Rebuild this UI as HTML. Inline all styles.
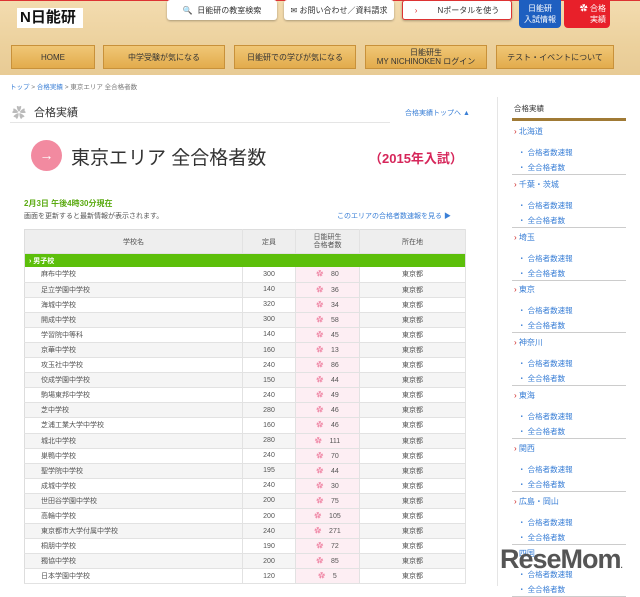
<!DOCTYPE html><html><head><meta charset="utf-8"><style>
*{margin:0;padding:0;box-sizing:border-box}
body{width:640px;height:586px;overflow:hidden;background:#fff;font-family:"Liberation Sans","Noto Sans CJK JP",sans-serif;position:relative;color:#333}
.a{position:absolute}
.hdr{left:0;top:0;width:640px;height:75px;background:linear-gradient(180deg,#f3dcb0,#ecd19d 60%,#e8cb95)}
.tb{background:#fff;border-radius:3px;box-shadow:0 1px 2px rgba(0,0,0,.3);font-size:8px;display:flex;align-items:center;justify-content:center;top:0;height:20px}
.nav{top:45px;height:24px;background:linear-gradient(#f0c776,#e2ab4c);border:1px solid #c8913a;font-size:8px;display:flex;align-items:center;justify-content:center;text-align:center;line-height:9px;color:#333}
table{border-collapse:collapse;font-size:7px;color:#555}
td{height:15.1px;border-bottom:1px solid #e2e2e2;border-right:1px solid #e2e2e2}
.sb{font-size:7.5px;color:#3a7fd6}
</style></head><body>
<div class="a hdr"></div>
<div class="a" style="left:0;top:0;width:640px;height:1px;background:#d33"></div>
<div class="a" style="left:17px;top:8px;width:66px;height:20px;background:#fff;font-size:15px;font-weight:bold;line-height:20px;padding-left:3px;color:#111">N日能研</div>
<div class="a tb" style="left:167px;width:110px">🔍&nbsp; 日能研の教室検索</div>
<div class="a tb" style="left:284px;width:110px">✉ お問い合わせ／資料請求</div>
<div class="a tb" style="left:402px;width:110px;border:1px solid #d33"><span style="color:#d33;margin-right:20px">›</span>Nポータルを使う</div>
<div class="a" style="left:519px;top:0;width:42px;height:28px;background:#1e5fc0;border-radius:0 0 4px 4px;color:#fff;font-size:8px;text-align:center;line-height:11px;padding-top:3px">日能研<br>入試情報</div>
<div class="a" style="left:564px;top:0;width:46px;height:28px;background:#e8202a;border-radius:0 0 4px 4px;color:#fff;font-size:8px;text-align:right;line-height:11px;padding:3px 4px 0 0">✿ 合格<br>実績</div>
<div class="a nav" style="left:11px;width:84px">HOME</div>
<div class="a nav" style="left:103px;width:122px">中学受験が気になる</div>
<div class="a nav" style="left:234px;width:122px">日能研での学びが気になる</div>
<div class="a nav" style="left:365px;width:122px">日能研生<br>MY NICHINOKEN ログイン</div>
<div class="a nav" style="left:496px;width:118px">テスト・イベントについて</div>
<div class="a" style="left:10px;top:81px;font-size:6.5px;color:#777"><span style="color:#3a7fd6">トップ</span> &gt; <span style="color:#3a7fd6">合格実績</span> &gt; 東京エリア 全合格者数</div>
<div class="a" style="left:12px;top:103px;font-size:14px;color:#bbb">✿</div>
<div class="a" style="left:34px;top:104px;font-size:11px;color:#333">合格実績</div>
<div class="a" style="left:405px;top:108px;font-size:7px;color:#3a7fd6">合格実績トップへ ▲</div>
<div class="a" style="left:10px;top:122px;width:380px;height:1px;background:#e5e5e5"></div>
<div class="a" style="left:497px;top:97px;width:1px;height:489px;background:#e5e5e5"></div>
<div class="a" style="left:31px;top:140px;width:31px;height:31px;border-radius:50%;background:#f28aa0;color:#fff;font-size:14px;line-height:31px;text-align:center">→</div>
<div class="a" style="left:71px;top:143px;font-size:19px;color:#333">東京エリア 全合格者数</div>
<div class="a" style="left:369px;top:148px;font-size:13px;font-weight:bold;color:#d6265a">（2015年入試）</div>
<div class="a" style="left:24px;top:198px;font-size:8px;font-weight:bold;color:#5aaa10">2月3日 午後4時30分現在</div>
<div class="a" style="left:24px;top:211px;font-size:7px;color:#555">画面を更新すると最新情報が表示されます。</div>
<div class="a" style="left:337px;top:211px;font-size:7px;color:#3a7fd6">このエリアの合格者数速報を見る ▶</div>
<table class="a" style="left:24px;top:229px;width:442px;border:1px solid #ddd">
<tr style="background:#eee;height:24px;text-align:center"><td style="width:218px">学校名</td><td style="width:53px">定員</td><td style="width:64px;line-height:8px">日能研生<br>合格者数</td><td>所在地</td></tr>
<tr style="background:#5cbf0a;color:#fff;font-weight:bold"><td colspan="4" style="height:14px;padding-left:4px;border:0">› 男子校</td></tr>
</table>
<table class="a" id="t" style="left:24px;top:267px;width:442px;border-left:1px solid #ddd"></table>
<div class="a" id="s"></div>
<div class="a" style="left:500px;top:544px;font-size:27px;font-weight:bold;color:#555;letter-spacing:-1px;font-family:'Liberation Sans',sans-serif">ReseMom<span style="font-size:8px">.</span></div>
<script>
var d=[["麻布中学校",300,80],["足立学園中学校",140,36],["海城中学校",320,34],["開成中学校",300,58],["学習院中等科",140,45],["京華中学校",160,13],["攻玉社中学校",240,86],["佼成学園中学校",150,44],["駒場東邦中学校",240,49],["芝中学校",280,46],["芝浦工業大学中学校",160,46],["城北中学校",280,111],["巣鴨中学校",240,70],["聖学院中学校",195,44],["成城中学校",240,30],["世田谷学園中学校",200,75],["高輪中学校",200,105],["東京都市大学付属中学校",240,271],["桐朋中学校",190,72],["獨協中学校",200,85],["日本学園中学校",120,5]];
var h="";d.forEach(function(r,i){h+='<tr style="background:'+(i%2?'#f5f5f5':'#fff')+'"><td style="width:218px;padding-left:16px">'+r[0]+'</td><td style="width:53px;text-align:center">'+r[1]+'</td><td style="width:64px;background:#fdeef3;text-align:center"><span style="color:#f08aa8">✿</span>&nbsp;&nbsp;&nbsp;&nbsp;'+r[2]+'</td><td style="text-align:center">東京都</td></tr>'});
document.getElementById("t").innerHTML=h;
var s='<div class="a" style="left:514px;top:103px;font-size:7.5px;color:#333">合格実績</div><div class="a" style="left:512px;top:118px;width:114px;height:3px;background:#a07a35"></div>';
["北海道","千葉・茨城","埼玉","東京","神奈川","東海","関西","広島・岡山","四国"].forEach(function(n,i){var y=126+i*52.8;
s+='<div class="a" style="left:514px;top:'+y+'px;font-size:8px;color:#3a7fd6"><span style="color:#c22">›</span> '+n+'</div>';
s+='<div class="a sb" style="left:518px;top:'+(y+21)+'px">・ 合格者数速報</div><div class="a sb" style="left:518px;top:'+(y+36)+'px">・ 全合格者数</div>';
s+='<div class="a" style="left:512px;top:'+(y+48)+'px;width:114px;height:1px;background:#ccc"></div>'});
document.getElementById("s").outerHTML=s;
</script>
</body></html>
